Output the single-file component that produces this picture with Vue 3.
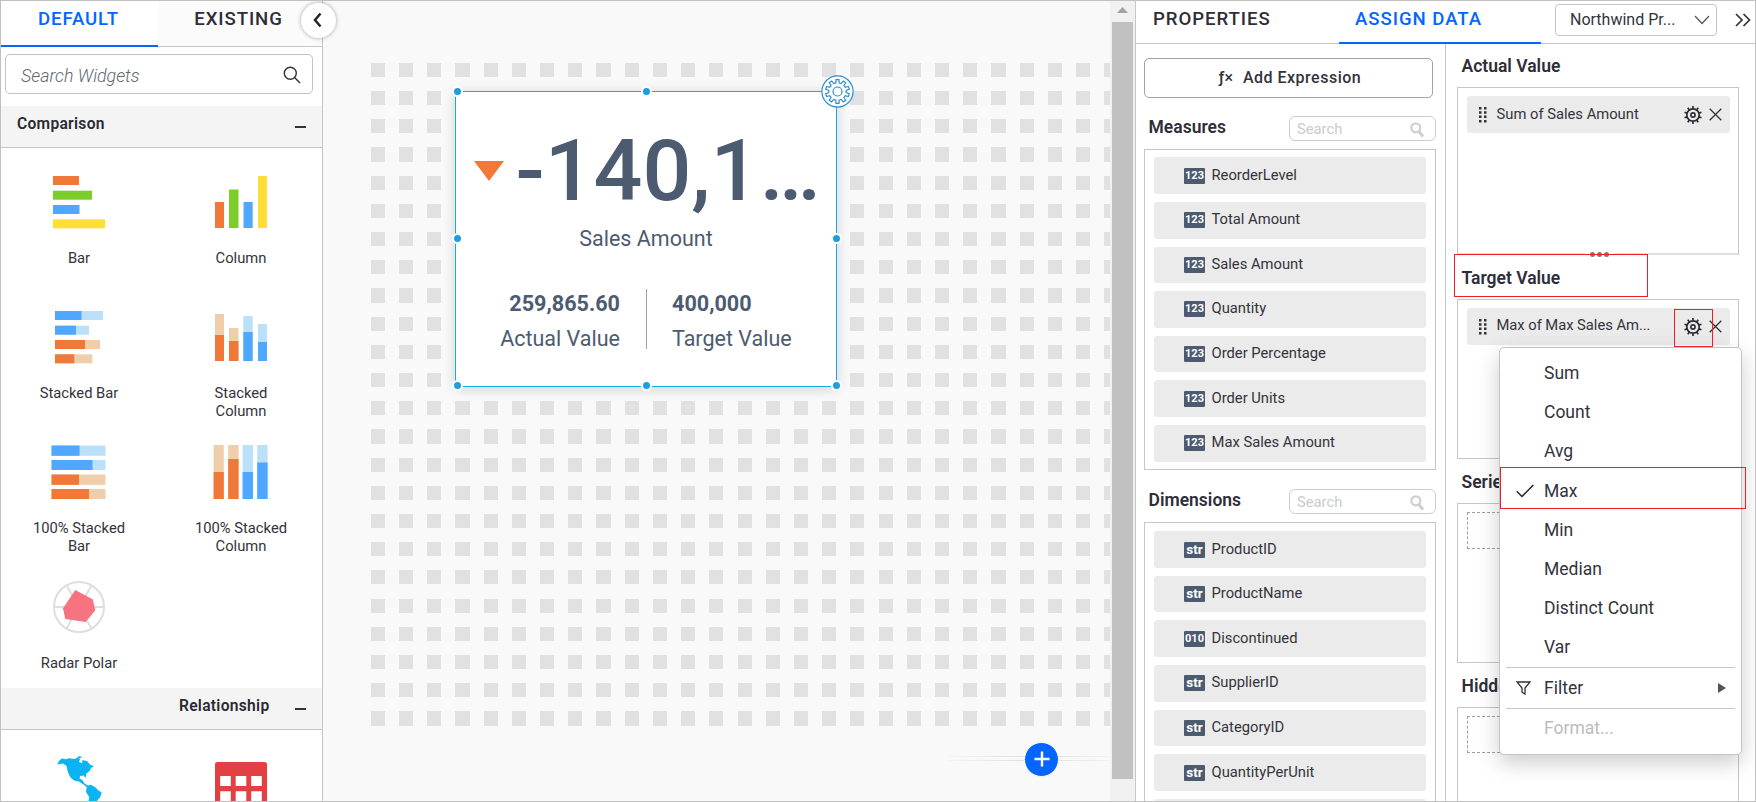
<script setup>
const ORANGE = '#f07839'
const GREEN = '#7bcd29'
const BLUE = '#4fa7ff'
const YELLOW = '#ffde39'
const SKY = '#bbe1fa'
const SAND = '#f1ceab'

const comparison = [
  { label: 'Bar', rects: [
    [4, 4, 26, 9, ORANGE], [4, 18.7, 39, 9, GREEN], [4, 33, 26.5, 9, BLUE], [4, 47.3, 52, 9, YELLOW]] },
  { label: 'Column', rects: [
    [4, 30, 9, 26, ORANGE], [18, 17.5, 9.5, 38.5, GREEN], [32.5, 30, 9.2, 26, BLUE], [47, 4, 9, 52, YELLOW]] },
  { label: 'Stacked Bar', rects: [
    [6, 4, 48, 9, SKY], [6, 4, 26.5, 9, BLUE], [6, 18.7, 34, 9, SKY], [6, 18.7, 21, 9, BLUE],
    [6, 33, 45, 9, SAND], [6, 33, 30, 9, ORANGE], [6, 47.3, 37.3, 9, SAND], [6, 47.3, 19.3, 9, ORANGE]] },
  { label: 'Stacked Column', rects: [
    [4, 7, 9, 47, SAND], [4, 28, 9, 26, ORANGE], [18, 21, 9.5, 33, SAND], [18, 34, 9.5, 20, ORANGE],
    [32.3, 9, 9.4, 45, SKY], [32.3, 25, 9.4, 29, BLUE], [47, 17, 9, 37, SKY], [47, 35, 9, 19, BLUE]] },
  { label: '100% Stacked Bar', rects: [
    [2.5, 3.5, 54, 10.3, SKY], [2.5, 3.5, 28, 10.3, BLUE], [2.5, 18, 54, 10, SKY], [2.5, 18, 41, 10, BLUE],
    [2.5, 32.5, 54, 10.3, SAND], [2.5, 32.5, 27.5, 10.3, ORANGE], [2.5, 47, 54, 10, SAND], [2.5, 47, 37.5, 10, ORANGE]] },
  { label: '100% Stacked Column', rects: [
    [2.6, 3, 10.2, 54, SAND], [2.6, 30, 10.2, 27, ORANGE], [17.2, 3, 10.4, 54, SAND], [17.2, 17, 10.4, 40, ORANGE],
    [31.6, 3, 10.4, 54, SKY], [31.6, 30, 10.4, 27, BLUE], [46.2, 3, 10.4, 54, SKY], [46.2, 20.5, 10.4, 36.5, BLUE]] },
  { label: 'Radar Polar', radar: true },
]

const measures = ['ReorderLevel', 'Total Amount', 'Sales Amount', 'Quantity', 'Order Percentage', 'Order Units', 'Max Sales Amount']
const dimensions = [
  ['str', 'ProductID'], ['str', 'ProductName'], ['010', 'Discontinued'], ['str', 'SupplierID'],
  ['str', 'CategoryID'], ['str', 'QuantityPerUnit'],
]
const aggregates = ['Sum', 'Count', 'Avg', 'Max', 'Min', 'Median', 'Distinct Count', 'Var']

// Snap the fractional grid pitch to whole pixels.
const snap = (count, start, pitch) =>
  Array.from({ length: count }, (_, i) => {
    const p = start + pitch * i + 0.3
    return { at: Math.floor(p), size: Math.floor(p + 14.1) - Math.floor(p) }
  })
const gridCols = snap(27, 371, 28.21).map(c => ({ ...c, at: c.at - 323 }))
const gridRows = snap(24, 63, 28.2)

const handles = ['tl', 'tc', 'ml', 'mr', 'bl', 'bc', 'br']

function gearPath(cx, cy, teeth, outer, inner) {
  const pts = []
  const step = (Math.PI * 2) / teeth
  for (let i = 0; i < teeth; i++) {
    const a = i * step - Math.PI / 2
    const corners = [[-0.29, inner], [-0.2, outer], [0.2, outer], [0.29, inner]]
    for (const [o, r] of corners) {
      pts.push(`${(cx + r * Math.cos(a + o * step)).toFixed(2)} ${(cy + r * Math.sin(a + o * step)).toFixed(2)}`)
    }
  }
  return `M${pts.join('L')}Z`
}
const widgetGear = gearPath(16.5, 16.5, 10, 12, 8.8)
const spokes = Array.from({ length: 10 }, (_, i) => i * 36)
</script>

<template>
  <div class="app">
    <aside class="widgets">
      <div class="tabs">
        <div class="tab active">DEFAULT</div>
        <div class="tab other">EXISTING</div>
      </div>
      <div class="find">
        <span>Search Widgets</span>
        <svg width="18" height="18" viewBox="0 0 18 18" fill="none" stroke="#333" stroke-width="1.4">
          <circle cx="7.3" cy="7.3" r="6" /><path d="M11.6 11.6L17 17" />
        </svg>
      </div>
      <div class="section-head"><span>Comparison</span><i /></div>
      <div class="widget-grid">
        <div v-for="w in comparison" :key="w.label" class="widget">
          <svg width="60" height="60" viewBox="0 0 60 60">
            <g v-if="w.radar">
              <g stroke="#dedede" stroke-width="2" fill="none">
                <circle cx="30" cy="30" r="25" />
                <path d="M5 30H55M17.5 8.4L42.5 51.6M42.5 8.4L17.5 51.6" />
              </g>
              <path fill="#f7737f" d="M26.3 13L43.7 22.3L46.3 33.3L36.7 45L16.3 42L14 31.3Z" />
            </g>
            <rect v-for="(r, i) in w.rects || []" :key="i" :x="r[0]" :y="r[1]" :width="r[2]" :height="r[3]" :fill="r[4]" />
          </svg>
          <span>{{ w.label }}</span>
        </div>
      </div>
      <div class="section-head right"><span>Relationship</span><i /></div>
      <div class="widget-grid">
        <div class="widget">
          <svg width="60" height="60" viewBox="0 0 60 60" fill="#0ab4f3">
            <path d="M8.3 10.5L10 7L12.7 4.5L17 5.2L20 4.2L25 5L29 3.6L31 5L30 8L33 9.3L33.5 6L38.3 7.3L41 10.5L45 12.3L42 14L41 16.5L37 20L36.7 24L34.5 21.5L31 22L30.6 25L33 25.5L35.5 29.5L39 31.5L41.7 30.7L46 33L49 36L52.7 38.7L51 43.5L48.5 46L47 50L45 60H42L39.3 48L40.3 43.3L37 38L37.7 33L34.5 30.5L30 27.5L25 26.5L21.5 23.5L19 18.5L17.5 12L14 9.5Z" />
            <path d="M28 3l3-1 2 1.5l-3 .8z" />
          </svg>
        </div>
        <div class="widget">
          <svg width="60" height="60" viewBox="0 0 60 60">
            <rect x="4" y="8" width="52" height="60" rx="2.5" fill="#e34043" />
            <path fill="#fff" d="M9.2 22h10.6v10H9.2zM24.7 22h10.6v10H24.7zM40.2 22h10.6v10H40.2zM9.2 37.2h10.6v12H9.2zM24.7 37.2h10.6v12H24.7zM40.2 37.2h10.6v12H40.2z" />
          </svg>
        </div>
      </div>
      <div class="collapse">
        <svg width="10" height="16" viewBox="0 0 10 16" fill="none" stroke="#26262e" stroke-width="2.5"><path d="M7.5 1.5L2 8L7.5 14.5" /></svg>
      </div>
    </aside>

    <main class="canvas">
      <svg class="dots" width="787" height="740" shape-rendering="crispEdges" fill="#e1e1e1">
        <template v-for="(r, j) in gridRows" :key="j">
          <rect v-for="(c, i) in gridCols" :key="i" :x="c.at" :y="r.at" :width="c.size" :height="r.size" />
        </template>
      </svg>
      <div class="kpi">
        <div class="kpi-main"><b class="down" /><span>-140,1…</span></div>
        <div class="kpi-title">Sales Amount</div>
        <div class="kpi-split">
          <div class="kpi-col end"><strong>259,865.60</strong><span>Actual Value</span></div>
          <div class="kpi-col"><strong>400,000</strong><span>Target Value</span></div>
        </div>
        <i v-for="h in handles" :key="h" class="handle" :class="h" />
        <svg class="kpi-gear" width="33" height="33" viewBox="0 0 33 33" fill="none" stroke="#2b8fd0" stroke-width="1.2">
          <circle cx="16.5" cy="16.5" r="15.6" fill="#fff" />
          <path :d="widgetGear" />
          <circle cx="16.5" cy="16.5" r="4.5" />
        </svg>
      </div>
      <div class="add-line" />
      <div class="add">
        <svg width="16" height="16" viewBox="0 0 16 16" stroke="#fff" stroke-width="2.4"><path d="M8 .5V15.5M.5 8H15.5" /></svg>
      </div>
    </main>

    <div class="scroll"><b /><i /></div>

    <section class="config">
      <header class="config-head">
        <span class="h-tab props">PROPERTIES</span>
        <span class="h-tab assign">ASSIGN DATA</span>
        <div class="select">
          <span>Northwind Pr...</span>
          <svg width="16" height="10" viewBox="0 0 16 10" fill="none" stroke="#555" stroke-width="1.2"><path d="M1 1L8 8.5L15 1" /></svg>
        </div>
        <svg class="more" width="16" height="14" viewBox="0 0 16 14" fill="none" stroke="#333" stroke-width="1.7"><path d="M1 1L7 7L1 13M8.5 1L14.5 7L8.5 13" /></svg>
      </header>
      <div class="config-body">
        <div class="fields">
          <div class="expr"><em>ƒ×</em><span>Add Expression</span></div>
          <div class="field-head first">
            <h3>Measures</h3>
            <div class="mini"><span>Search</span>
              <svg width="15" height="16" viewBox="0 0 15 16" fill="none" stroke="#cfcfcf"><circle cx="5.8" cy="5.8" r="4.5" stroke-width="2.2" /><path d="M8.8 9.5L13 14.5" stroke-width="3" /></svg>
            </div>
          </div>
          <div class="field-box meas">
            <div v-for="m in measures" :key="m" class="field"><b>123</b><span>{{ m }}</span></div>
          </div>
          <div class="field-head second">
            <h3>Dimensions</h3>
            <div class="mini"><span>Search</span>
              <svg width="15" height="16" viewBox="0 0 15 16" fill="none" stroke="#cfcfcf"><circle cx="5.8" cy="5.8" r="4.5" stroke-width="2.2" /><path d="M8.8 9.5L13 14.5" stroke-width="3" /></svg>
            </div>
          </div>
          <div class="field-box dims">
            <div v-for="d in dimensions" :key="d[1]" class="field"><b :class="d[0]">{{ d[0] }}</b><span>{{ d[1] }}</span></div>
            <div class="field" />
          </div>
        </div>

        <div class="slots">
          <h3>Actual Value</h3>
          <div class="slot tall">
            <div class="chip">
              <svg class="grip" width="8" height="16" viewBox="0 0 8 16" fill="#333"><path d="M0 0h2.5v2.5H0zM5 0h2.5v2.5H5zM0 4.3h2.5v2.5H0zM5 4.3h2.5v2.5H5zM0 8.6h2.5v2.5H0zM5 8.6h2.5v2.5H5zM0 12.9h2.5v2.5H0zM5 12.9h2.5v2.5H5z" /></svg>
              <span>Sum of Sales Amount</span>
              <svg width="18" height="18" viewBox="0 0 18 18" fill="none" stroke="#2c2c33">
                <circle cx="9" cy="9" r="6.2" stroke-width="1.7" /><circle cx="9" cy="9" r="2.1" stroke-width="1.6" />
                <path v-for="a in spokes" :key="a" d="M9 .1V2.8" stroke-width="1.7" :transform="`rotate(${a} 9 9)`" />
              </svg>
              <svg class="x" width="13" height="13" viewBox="0 0 13 13" stroke="#333" stroke-width="1.3"><path d="M.7 .7L12.3 12.3M12.3 .7L.7 12.3" /></svg>
            </div>
            <div class="resize"><i /><i /><i /></div>
          </div>
          <h3 class="gap1">Target Value</h3>
          <div class="slot">
            <div class="chip">
              <svg class="grip" width="8" height="16" viewBox="0 0 8 16" fill="#333"><path d="M0 0h2.5v2.5H0zM5 0h2.5v2.5H5zM0 4.3h2.5v2.5H0zM5 4.3h2.5v2.5H5zM0 8.6h2.5v2.5H0zM5 8.6h2.5v2.5H5zM0 12.9h2.5v2.5H0zM5 12.9h2.5v2.5H5z" /></svg>
              <span class="long">Max of Max Sales Am...</span>
              <svg width="18" height="18" viewBox="0 0 18 18" fill="none" stroke="#2c2c33">
                <circle cx="9" cy="9" r="6.2" stroke-width="1.7" /><circle cx="9" cy="9" r="2.1" stroke-width="1.6" />
                <path v-for="a in spokes" :key="a" d="M9 .1V2.8" stroke-width="1.7" :transform="`rotate(${a} 9 9)`" />
              </svg>
              <svg class="x" width="13" height="13" viewBox="0 0 13 13" stroke="#333" stroke-width="1.3"><path d="M.7 .7L12.3 12.3M12.3 .7L.7 12.3" /></svg>
            </div>
          </div>
          <h3>Series</h3>
          <div class="slot"><div class="empty" /></div>
          <h3>Hidden</h3>
          <div class="slot"><div class="empty" /></div>
        </div>
      </div>
    </section>

    <div class="menu">
      <div v-for="a in aggregates" :key="a" class="item">
        <svg v-if="a === 'Max'" width="18" height="14" viewBox="0 0 18 14" fill="none" stroke="#222" stroke-width="1.5"><path d="M.7 7.3L6 12.5L17.3 1" /></svg>
        <span>{{ a }}</span>
      </div>
      <hr>
      <div class="item filter">
        <svg width="15" height="14" viewBox="0 0 15 14" fill="none" stroke="#333" stroke-width="1.3"><path d="M1 1H14L9 7V13L6 11.2V7Z" /></svg>
        <span>Filter</span><u />
      </div>
      <hr>
      <div class="item format"><span>Format...</span></div>
    </div>
    <div class="mark m1" />
    <div class="mark m2" />
    <div class="mark m3" />
  </div>
</template>

<style>
body { margin: 0; overflow: hidden; }
</style>

<style scoped>
* { box-sizing: border-box; }
.app {
  position: relative; display: flex; width: 1756px; height: 802px; overflow: hidden;
  font-family: Roboto, "Liberation Sans", sans-serif; font-size: 14.75px; color: #33333b; background: #fff;
}
.app::after { content: ""; position: absolute; inset: 0; border: 1px solid #c1c1c1; z-index: 10; }

.widgets { position: relative; flex: none; width: 323px; height: 802px; border-right: 1px solid #c6c6c6; padding: 1px 0 0 1px; z-index: 2; background: #fff; }
.tabs { display: flex; height: 46px; font-size: 18.6px; font-weight: 500; letter-spacing: .9px; line-height: 36px; }
.tab { height: 46px; text-align: center; }
.tab.active { width: 157px; padding-right: 2px; color: #0565ff; border-bottom: 2px solid #0565ff; }
.tab.other { flex: 1; background: #fbfbfb; border-bottom: 1px solid #c6c6c6; padding-right: 3px; color: #2e2e38; }
.find { display: flex; align-items: center; justify-content: space-between; width: 308px; height: 40px; margin: 7px 0 0 4px; padding: 0 11px 0 15px; border: 1px solid #c2c2c2; border-radius: 5px; }
.find span { font-size: 17.8px; font-style: italic; font-weight: 300; color: #60676f; padding-top: 3px; }
.find svg { margin-top: 2px; }
.section-head { display: flex; align-items: center; justify-content: space-between; height: 42px; margin-top: 12px; padding: 0 16px 3px 16px; background: #f4f4f4; border-bottom: 1px solid #c6c6c6; font-size: 15.6px; font-weight: 600; letter-spacing: .28px; color: #2a2a33; }
.section-head span { padding-bottom: 2px; }
.section-head.right { margin-top: 0; }
.section-head.right span { margin-left: 162px; }
.section-head i { width: 11px; height: 2px; margin-top: 3px; background: #33333b; }
.widget-grid { display: grid; grid-template-columns: 162px 162px; margin-left: -3px; }
.widget { display: flex; flex-direction: column; align-items: center; height: 135px; padding-top: 24px; }
.widget svg { flex: none; }
.widget span { width: 100px; margin-top: 17px; line-height: 18px; text-align: center; }
.collapse { position: absolute; left: 301px; top: 3px; width: 35px; height: 35px; border-radius: 50%; background: #fff; box-shadow: 0 0 4px rgba(0, 0, 0, .35); display: flex; align-items: center; justify-content: center; padding: 0 1px 2px 0; }

.canvas { position: relative; flex: none; width: 787px; height: 802px; background: #f9f9f9; overflow: hidden; }
.dots { display: block; }
.kpi { position: absolute; left: 132px; top: 91px; width: 382px; height: 296px; background: #fff; border: 1px solid #16abe8; box-shadow: 0 2px 12px rgba(0, 0, 0, .16); color: #4d5b70; }
.kpi-main { display: flex; height: 128px; padding-left: 18px; font-size: 86px; font-weight: 500; line-height: 100px; }
.kpi-main span { margin: 29px 0 0 11.5px; white-space: nowrap; }
.down { flex: none; width: 30px; height: 20px; margin-top: 69px; background: #f07839; clip-path: polygon(0 0, 100% 0, 50% 100%); }
.kpi-title { height: 36px; line-height: 38px; text-align: center; font-size: 21.5px; }
.kpi-split { display: flex; margin-top: 33px; height: 60px; }
.kpi-col { flex: 1; display: flex; flex-direction: column; padding-left: 25px; font-size: 21.5px; line-height: 35px; white-space: nowrap; }
.kpi-col strong { font-weight: 700; font-size: 21.6px; margin-top: -3.5px; margin-bottom: .5px; }
.kpi-col.end { align-items: flex-end; padding: 0 26px 0 0; border-right: 1px solid #9aa0a8; flex: none; width: 191px; }
.handle { position: absolute; width: 11px; height: 11px; border-radius: 50%; border: 2px solid #fff; background: #1d9fdd; }
.tl, .tc { top: -6px; }
.ml, .mr { top: 141px; }
.bl, .bc, .br { top: 288px; }
.tl, .ml, .bl { left: -4px; }
.tc, .bc { left: 185px; }
.mr, .br { left: 375px; }
.kpi-gear { position: absolute; left: 365px; top: -17px; }
.add-line { position: absolute; left: 625px; top: 756px; width: 162px; height: 5px; background: linear-gradient(90deg, #f5f5f5, #e0e0e0 45%, #e2e2e2 65%, #f1f1f1); }
.add-line::after { content: ""; position: absolute; inset: 1px 0; background: #f9f9f9; }
.add { position: absolute; left: 701px; top: 742px; width: 35px; height: 35px; border-radius: 50%; border: 1px solid #fff; background: #0565ff; display: flex; align-items: center; justify-content: center; padding: 0 0 2px; }

.scroll { flex: none; width: 25px; height: 802px; padding: 7px 2px 0; background: #f1f1f1; }
.scroll b { display: block; width: 11px; height: 6px; margin-left: 5px; background: #a3a3a3; clip-path: polygon(50% 0, 100% 100%, 0 100%); }
.scroll i { display: block; width: 21px; height: 757px; margin-top: 9px; background: #c1c1c1; }

.config { flex: 1; height: 802px; border-left: 1px solid #c6c6c6; background: #fff; }
.config-head { display: flex; height: 44px; border-bottom: 1px solid #c6c6c6; }
.h-tab { font-size: 18.6px; font-weight: 500; letter-spacing: .95px; line-height: 38px; color: #2e2e38; height: 44px; white-space: nowrap; }
.props { width: 203px; padding-left: 17px; }
.assign { width: 202px; padding-left: 16px; color: #0565ff; border-bottom: 2px solid #0565ff; }
.select { display: flex; align-items: center; justify-content: space-between; width: 162px; height: 32px; margin: 4px 0 0 14px; padding: 0 6px 1px 14px; border: 1px solid #c6c6c6; border-radius: 4px; font-size: 16px; white-space: nowrap; }
.more { margin: 13px 0 0 18px; }
.config-body { display: flex; height: 758px; overflow: hidden; }
.fields { flex: none; width: 310px; border-right: 1px solid #c6c6c6; padding: 14px 0 0 8px; }
.expr { display: flex; align-items: center; justify-content: center; gap: 10px; width: 289px; height: 40px; padding: 0 0 2px 3px; border: 1px solid #a3a3a3; border-radius: 5px; font-size: 16px; font-weight: 500; letter-spacing: .5px; }
.expr em { font-style: normal; letter-spacing: 0; }
h3 { margin: 0; font-size: 17.5px; font-weight: 600; color: #2e2e38; }
.field-head { display: flex; width: 292px; justify-content: space-between; padding-left: 4.5px; }
.first { height: 51px; padding-top: 18px; }
.second { height: 52px; padding-top: 19px; }
.field-head h3 { line-height: 22px; }
.mini { display: flex; justify-content: space-between; align-items: center; width: 147px; height: 25px; padding: 0 10px 0 7px; border: 1px solid #cdcdcd; border-radius: 6px; color: #c8ccc9; }
.mini svg { margin-top: 2px; }
.field-box { width: 292px; border: 1px solid #c6c6c6; padding: 7.4px 9px 0; display: flex; flex-direction: column; gap: 8px; }
.meas { height: 321px; }
.dims { height: 330px; padding-top: 8.3px; }
.field { display: flex; flex: none; align-items: center; height: 36.6px; padding-left: 30px; border-radius: 3px; background: #ebebeb; }
.field b { width: 21px; height: 16px; background: #4d5b70; color: #fff; border-radius: 1px; text-align: center; font: 700 11px/16px Roboto, sans-serif; }
.field b.str { font-size: 13.5px; line-height: 15px; }
.field span { margin-left: 6.5px; padding-bottom: 2px; }

.slots { flex: 1; padding: 0 0 0 11px; }
.slots h3 { height: 44px; padding: 0 0 0 4.5px; line-height: 47px; }
.slots h3:first-child { height: 43px; line-height: 45px; }
.slots h3.gap1 { height: 44px; line-height: 47px; }
.slot { position: relative; width: 282px; height: 160px; padding: 8px 8px 0 9px; border: 1px solid #c6c6c6; }
.tall { height: 168px; border-bottom: 2px solid #dedede; }
.chip { display: flex; align-items: center; height: 37px; padding: 0 8px 0 12px; border-radius: 3px; background: #ebebeb; }
.chip span { flex: 1; margin-left: 9.5px; padding-bottom: 1px; white-space: nowrap; }
.chip .long { padding-bottom: 3px; letter-spacing: -.03px; }
.chip .x { margin-left: 7px; }
.resize { position: absolute; left: 127px; bottom: -4px; display: flex; gap: 2px; padding: 0 5px; background: #fff; }
.resize i { width: 5px; height: 5px; border-radius: 50%; background: #7a7a7a; }
.empty { height: 37px; border: 1px dashed #a0a0a0; }

.menu { position: absolute; left: 1499px; top: 347px; width: 243px; height: 408px; padding: 5.4px 6px; border: 1px solid #c4c4c4; border-radius: 5px; background: #fff; box-shadow: 0 8px 22px rgba(0, 0, 0, .2); font-size: 17.5px; z-index: 3; }
.item { position: relative; display: flex; align-items: center; height: 39.2px; padding-left: 38px; }
.item svg { position: absolute; left: 9.5px; }
.menu hr { margin: 0; border: 0; height: 1px; background: #c6c6c6; }
.filter { height: 40px; }
.filter svg { left: 10px; }
.filter u { position: absolute; right: 9px; width: 8px; height: 10px; background: #54505c; clip-path: polygon(0 0, 100% 50%, 0 100%); }
.format { height: 38px; color: #bcbcbc; }
.mark { position: absolute; border: 1px solid #ee2026; z-index: 4; }
.m1 { left: 1454px; top: 254px; width: 194px; height: 43px; }
.m2 { left: 1674px; top: 309px; width: 39px; height: 38px; }
.m3 { left: 1500px; top: 467px; width: 246px; height: 42px; }
</style>
